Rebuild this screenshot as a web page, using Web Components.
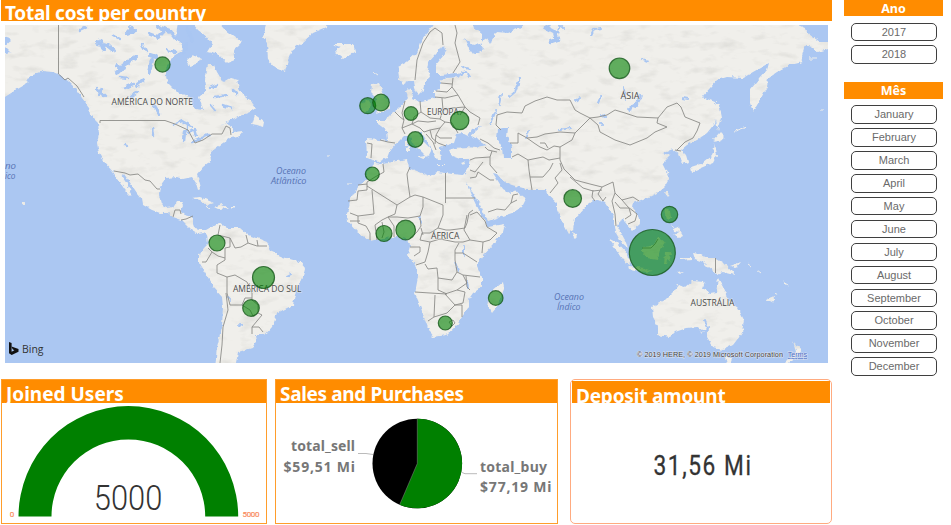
<!DOCTYPE html>
<html lang="pt">
<head>
<meta charset="utf-8">
<title>Dashboard</title>
<style>
html,body{margin:0;background:#fff;height:525px;overflow:hidden}
</style>
</head>
<body>
<cost-dashboard></cost-dashboard>
<script>
const define = (name, html, setup) => customElements.define(name, class extends HTMLElement {
  constructor() {
    super();
    this.attachShadow({ mode: 'open' }).innerHTML = html;
  }
  connectedCallback() { if (setup) setup(this, this.shadowRoot); }
});

define('title-bar', `
<style>
:host{display:block;background:#ff8c00;color:#fff;overflow:hidden;height:var(--bar-h,21px);box-sizing:border-box;
font:700 19px/25px "Noto Sans","Open Sans",sans-serif;padding:var(--bar-pad,1px 0 0 4px);white-space:nowrap;letter-spacing:var(--bar-ls,0)}
</style><slot></slot>`);

const borders = [
 '58.5,25 58.5,74 65,80 68,78 77,86 84,97','100,123 100,120.5 165,120.5 175,124 188,130 195,143 203,140 212,134 222,134 226,126 230,128 231,135',
 '114,171 125,173 130,175 138,174 145,180 150,181 157,189 160,189','173,217 175,210 180,210 181,214','181,220 186,219 193,216',
 '220,225 218,235 230,238 230,247 225,248 225,260 217,265 217,273 227,277 235,275 247,282 252,293 252,300 258,305 258,313 262,315 252,327 252,334',
 '227,277 227,293 230,305 242,305 245,298 252,298','226,293 228,310 223,327 222,345 220,363','242,305 250,310 253,316 258,313','252,327 259,327 263,332',
 '202,262 206,262 212,252 208,248','212,252 218,256 225,258','230,238 235,248 241,247 248,243 246,235','248,243 257,246 267,246','257,240 258,246',
 '383,164 384,172 375,177 367,182 367,186 397,205 410,197 408,183 407,174 410,167','367,184 358,185','367,186 367,190 358,191 357,200 348,201','372,190 374,214 358,216 350,213',
 '397,205 395,214 388,217 382,220 375,225 377,240','410,197 415,195 423,197 443,205','445.5,173 445.5,203','445.5,198 475,198','443,205 443,215 438,228 446,230 450,230 458,229 465,228 467,223 469,213 473,210',
 '423,197 423,207 420,216 408,218 397,217 388,217','420,218 421,226 417,232 410,238','388,217 394,226 394,237','382,222 384,232 382,238','358,216 358,223 366,226 370,233 370,240','350,221 360,221',
 '467,215 464,230 470,240 483,242 490,240 497,233 487,227 485,221 477,212 470,215','483,242 482,253','422,233 420,240 430,242 440,239 455,242 463,242 470,240','438,228 430,233 422,233','421,228 423,235',
 '410,247 420,247 420,252 414,256','430,242 428,252 425,262 416,265','425,264 428,269 437,268 438,278 452,280 457,272 455,260 455,250 459,243','415,292 430,293 447,294 438,290 438,278',
 '435,295 434,317 428,321','434,317 447,313 455,305 445,294','445,294 457,290 465,292 463,303 455,305 462,305 462,317','457,290 467,283 463,275 457,272','463,275 480,277','455,253 463,253 477,262','466,276 467,287 470,290','449,322 453,320 455,323 452,326 449,322',
 '415,80 417,60 423,43 430,32 435,28 442,33 443,45','455,25 457,33 455,43 460,62 453,73','453,78 452,87 458,95 465,107 460,115','436,91 447,92 452,87','435,97 445,98 458,95','441,83 452,84','420,101 421,112 430,118 440,119 443,110 442,98',
 '405,101 402,113 404,120 402,128 405,134','395,112 400,117 404,120','402,128 412,124 420,128 424,132','412,124 414,117 421,112','412,124 418,121 428,122 436,121','424,132 430,130 440,128 445,122 440,119','440,128 436,135 440,138 452,138','430,130 432,138 438,143 446,146','426,134 433,142 436,150','436,135 435,144',
 '443,110 452,108 465,107 470,112 480,118 478,125','445,122 452,123 455,128 458,133','367,143 372,144 371,158','380,140 388,142 395,143',
 '480,139 488,143 494,148 500,150','485,147 488,150 497,152','470,160 475,158 490,157 492,151','490,157 490,165 497,173','470,170 475,172 483,162','470,178 476,177 478,172 490,180 494,180','488,212 497,209 505,210 511,203 517,200','511,203 513,195 518,194',
 '501,130 496,125 497,115 507,112 522,113 525,106 535,101 547,97 557,100 570,100 575,110 580,113 590,118 598,117 607,115 615,110 625,113 637,117 658,118 667,107 677,103 681,107 685,117 700,123 697,131 693,138 685,142 677,150',
 '590,118 598,125 600,132 615,140 630,145 647,138 655,132 667,127 657,123 658,118','590,118 583,125 575,133 572,140 560,147 560,160 564,169 575,180 590,184 602,187 613,182 615,193 622,200 633,197 639,201',
 '570,177 583,188 593,191 602,190','602,187 598,194 603,201 606,197','615,193 612,201 615,214 616,226','615,202 620,208 629,208 631,215 625,219','622,200 628,207 637,214 635,221 628,224','593,190 592,197 595,201','550,193 558,183 555,178 562,170 560,163',
 '510,143 518,143 518,133 527,138 534,143 540,147 547,150 554,146 560,147','512,157 518,154 528,160 543,157 549,160 560,158','528,160 529,170 530,177 532,190','530,177 543,177 550,169 553,163','540,143 545,143 548,148','527,138 537,137 545,134 560,132 575,133',
 '642,248 651,248 655,244 658,239','715.5,258 715.5,273','675,150 681,151'
].map(p => `<polyline points="${p}"/>`).join('');

const lakes = `
<g fill="none" stroke="#a9c6f2" stroke-linecap="round" stroke-linejoin="round">
<path stroke-width="4" d="M97 43l10 2 6 5M101 41l3 9M118 66l6 3-8 3M150 55l6 2M152 60l-3 12M136 57l-7 4-10 8M126 33l9-2M150 34l8 3 6-6M130 27l4 5M158 27l12 4 6 8M143 80l-6 5M187 28l5 12M186 44l-2 8"/>
<path stroke-width="2.5" d="M154 105l6 10M174 125l8-4 9 5M184 141l1-9 3-5M188 133l6-4 2 7M193 142l8-3M203 137l6-2M96 88l9 8M99 95l3-6M152 128l1 7M125 145l2 1M113 35l7 4M80 30l7-3M124 88l9-4M137 92l-6 5M120 77l9 1M167 50l8 2M142 44l4 7M210 88l7-3M215 97l12-2M223 105l9 3M233 90l4 4M211 105l4 5"/>
<path stroke-width="2" d="M563 28l-3-3-3 9M591 35l3-6 8-1M642 59l6 2M624 88l1 12M520 78l-5 14-6 5M501 95l-2 10M496 110l-6 15M529 131l-3 8M559 130l11-2M601 96l-3 7M575 101l4-3M683 98l5 1M459 75l7-3 3 5M463 67l7 2M601 115l4 2M600 123l2 1M464 246v9M455 262l3 9M467 282l1 6M420 218l1 4M287 276l4-2M240 325l2 1M228 298l2 2M705 320l3 8M702 331l6-2"/>
<path stroke-width="3.6" d="M629 109l8-5 4-8"/>
<path stroke-width="4.5" d="M546 27l9 5 2 8-6 2"/>
</g>`;

define('world-map', `
<style>
:host{display:block;overflow:hidden;background:#abc7f2}
svg{display:block;width:823px;height:338px}
.c{font:8.6px "Open Sans","Noto Sans",sans-serif;fill:#4a4a4a;stroke:#f3f3ef;stroke-opacity:.7;stroke-width:1.2px;paint-order:stroke}
.o{font:italic 8.6px "Open Sans","Noto Sans",sans-serif;fill:#5672b2}
.bing{font:11.5px "Open Sans",sans-serif;fill:#333}
.cr{font:7.3px "Liberation Sans",sans-serif;fill:#444;stroke:#e8e8f0;stroke-opacity:.8;stroke-width:1px;paint-order:stroke}
.b circle{fill:#008000;fill-opacity:.6;stroke:#17591b;stroke-opacity:.8;stroke-width:1.2}
</style>
<svg viewBox="5 25 823 338">
<defs>
<filter id="rough" x="5" y="25" width="823" height="338" filterUnits="userSpaceOnUse" color-interpolation-filters="sRGB">
<feTurbulence type="fractalNoise" baseFrequency=".22" numOctaves="2" seed="4" result="n"/>
<feDisplacementMap in="SourceGraphic" in2="n" scale="4.5" xChannelSelector="R" yChannelSelector="G"/>
</filter>
<filter id="terrain" x="5" y="25" width="823" height="338" filterUnits="userSpaceOnUse" color-interpolation-filters="sRGB">
<feTurbulence type="fractalNoise" baseFrequency=".22" numOctaves="2" seed="4" result="n"/>
<feDisplacementMap in="SourceGraphic" in2="n" scale="4.5" xChannelSelector="R" yChannelSelector="G"/>
<feGaussianBlur stdDeviation=".3" result="land"/>
<feTurbulence type="fractalNoise" baseFrequency=".05 .12" numOctaves="3" seed="9"/>
<feColorMatrix values="0 0 0 0 .72  0 0 0 0 .72  0 0 0 0 .70  .7 0 0 0 -.36"/>
<feComposite operator="in" in2="land" result="shade"/>
<feMerge><feMergeNode in="land"/><feMergeNode in="shade"/></feMerge>
</filter>
</defs>
<rect x="5" y="25" width="823" height="338" fill="#abc7f2"/>
<g filter="url(#terrain)" fill="#f0efeb">
<path d="M0 20H178L176 37 181 43 184 50 175 55 170 60 165 72 168 83 177 92 190 97 195 109 203 110 199 97 207 90 205 80 208 65 214 65 217 72 223 82 230 78 237 80 240 92 250 100 256 108 250 112 237 117 227 122 219 127 226 123 233 127 233 132 243 131 238 137 230 138 220 145 211 152 212 160 203 167 197 174 199 181 201 189 198 190 196 183 192 177 183 179 177 177 166 178 160 186 159 195 161 203 166 208 174 207 177 202 184 202 181 208 181 212 185 215 193 217 193 223 195 229 200 230 206 230 213 226 220 223 227 228 240 228 248 235 257 238 267 242 272 252 283 257 300 262 305 268 302 280 296 290 293 305 277 313 272 327 265 335 256 335 257 340 252 348 238 352 235 368H215L217 347 222 327 223 307 222 297 213 287 205 273 199 263 199 255 203 248 208 243 207 235 204 232 197 233 192 230 187 225 182 220 173 217 168 213 160 213 152 210 143 205 142 199 137 193 131 184 124 174 121 175 127 184 132 194 131 196 125 190 119 181 113 172 105 163 99 153 97 143 99 133 98 123 90 115 89 107 82 98 77 90 68 81 60 75 53 72 43 71 33 75 26 78 28 83 16 90 0 100V54L11 52 5 46 12 40 0 36Z"/>
<path d="M190 20H216L225 30 242 42 233 50 235 60 227 63 220 55 207 52 212 44 206 36 198 30ZM187 60L193 55 201 58 197 64 190 66ZM207 33l5-2 1 5-5 1zM252 124L255 115 258 117 264 122 263 127 257 125ZM268 20L263 37 267 43 268 60 275 68 285 72 288 60 292 50 303 42 313 33 327 27 330 20ZM332 44L340 47 335 53 343 59 355 52 353 44 342 44ZM372 84L380 83 382 90 385 97 390 103 389 109 376 114 378 110 374 107 377 99 371 93ZM361 104L368 100 371 105 368 111 361 112Z"/>
<path d="M366 139L380 140 387 141 386 130 377 123 377 120 385 120 390 115 395 112 400 107 405 101 408 97 406 92 410 88 413 93 412 99 418 102 427 100 435 98 435 91 440 89 440 81 447 78 460 77 457 73 440 75 436 71 436 65 442 57 447 50 441 46 437 53 428 63 427 70 430 75 425 82 423 90 418 95 415 88 414 81 408 81 403 84 399 78 398 67 407 62 417 53 422 40 430 30 436 20H465L482 33 482 42 473 45 464 38 468 47 473 54 484 49 480 43 487 38 490 43 497 32 507 33 520 28 530 20H786L805 28 810 35 820 42 828 42 828 49 818 52 812 47 805 45 802 55 803 62 790 65 777 72 768 78 767 87 760 100 753 112 750 103 750 90 760 78 767 70 769 63 760 68 753 72 743 78 727 77 717 80 710 88 702 97 715 102 718 110 715 123 707 133 697 140 687 145 681 150 686 155 688 162 683 164 679 154 672 149 662 153 671 155 663 163 668 173 669 179 665 186 657 193 647 198 638 201 633 203 632 208 638 215 640 223 632 230 625 222 621 218 617 226 625 240 628 248 621 242 616 233 613 215 605 203 598 200 593 201 586 206 575 218 573 230 569 234 563 223 557 210 557 203 548 195 546 190 532 190 523 188 512 185 503 181 497 174 493 173 503 189 510 193 516 190 519 194 526 199 522 207 512 213 488 221 480 205 470 188 466 180 470 192 477 207 482 217 488 227 505 224 503 232 493 245 482 257 477 266 482 277 482 287 473 293 468 300 468 308 462 317 455 328 447 335 433 337 430 333 425 320 421 308 415 293 418 277 415 265 408 255 410 245 407 239 397 237 383 238 370 241 357 232 348 222 347 213 351 199 358 186 367 180 367 172 375 163 383 164 407 159 409 168 422 173 430 176 437 172 445 173 463 175 468 169 470 159 460 159 452 156 449 150 455 148 467 147 475 148 486 145 478 139 470 136 476 131 482 126 472 129 468 136 462 133 457 134 454 143 440 147 440 151 441 160 437 160 433 151 427 141 421 132 418 133 424 142 431 149 427 157 422 152 414 145 409 136 404 136 398 142 395 144 390 150 387 158 378 162 373 160 367 158Z"/>
<path d="M417 156l8-1 0 5zM406 147l3-1 0 6-3 0zM406 141h2v4h-2zM438 165h7v1h-7zM461 163l5-2-3 4zM433 90h2v3h-2zM573 231l4 5-3 3zM503 282L504 288 497 307 492 313 488 307 490 293ZM608 238L617 243 628 255 630 265 625 262 617 250ZM642 247L653 246 658 237 665 242 660 250 658 260 647 258 642 252ZM629 266L644 268 653 271 645 272 630 269ZM665 253l6-1 1 3-4 0 4 7-4-3-1 5-3 0zM665 208l5 2 1 8-4 3zM671 224l3 4 4-1 2 5-6-1zM673 235L680 231 683 236 679 238ZM665 193L669 190 668 197ZM681 258h10v1l-10 1zM676 273l8-1-5 3zM693 253L700 254 707 258 715 258 727 265 735 275 723 272 717 274 708 267 703 262 695 259ZM730 266l11-4-5 6zM652 307L653 317 658 326 657 335 670 337 675 332 687 328 697 327 702 333 707 330 707 337 713 347 723 350 733 345 742 333 744 320 738 308 728 300 723 287 718 278 716 293 710 294 703 288 705 282 692 281 685 287 678 285 673 292 665 300ZM725 357L732 358 730 364 727 364ZM793 340L796 346 802 349 797 356 792 360 784 368 780 368 790 358 796 352ZM716 101L720 108 722 118 718 130 716 120ZM713 140L720 132 726 138 718 142ZM715 143L717 155 713 163 703 167 692 172 691 167 703 163 712 156ZM192 198L200 197 207 200 214 203 208 205 200 200ZM214 207L222 204 229 208 218 209ZM206 207l4 0 0 2-4-1zM231 207h4v1.5h-4zM22 201l3 2 0 2-3-1zM767 300l7-3 0 3-6 1z"/>
</g>
<g filter="url(#rough)">
<path fill="#a9c6f2" d="M498 130L508 128 507 137 512 147 512 158 503 158 502 147 497 138Z"/>
${lakes}
<path fill="none" stroke="#efeeea" stroke-width="1" d="M774 293l5 2M783 282l5 3M748 264l4 3M757 270l4 3M767 299l6 3M346 183l7 0M809 58h8M820 110h4M735 131l12-4M374 72l3 2M327 156h2"/>
</g>
<g fill="none" stroke="#8c8c89" stroke-width=".9" stroke-linejoin="round">${borders}</g>
<text class="c" x="111.5" y="104.7" textLength="81.5" lengthAdjust="spacingAndGlyphs">AMÉRICA DO NORTE</text>
<text class="c" x="427" y="114.8" textLength="31.5" lengthAdjust="spacingAndGlyphs">EUROPA</text>
<text class="c" x="620.5" y="98.7" textLength="19" lengthAdjust="spacingAndGlyphs">ÁSIA</text>
<text class="c" x="431" y="239.2" textLength="28.3" lengthAdjust="spacingAndGlyphs">ÁFRICA</text>
<text class="c" x="233" y="291.8" textLength="68.5" lengthAdjust="spacingAndGlyphs">AMÉRICA DO SUL</text>
<text class="c" x="690.5" y="306.2" textLength="44" lengthAdjust="spacingAndGlyphs">AUSTRÁLIA</text>
<text class="o" x="276" y="174.3" textLength="30" lengthAdjust="spacingAndGlyphs">Oceano</text>
<text class="o" x="271" y="184.2" textLength="35.5" lengthAdjust="spacingAndGlyphs">Atlântico</text>
<text class="o" x="554" y="300.3" textLength="30" lengthAdjust="spacingAndGlyphs">Oceano</text>
<text class="o" x="557" y="310.3" textLength="23.5" lengthAdjust="spacingAndGlyphs">Índico</text>
<text class="o" x="5" y="169.3" textLength="11" lengthAdjust="spacingAndGlyphs">no</text>
<text class="o" x="5" y="179" textLength="10.5" lengthAdjust="spacingAndGlyphs">ico</text>
<path fill="#111" d="M9 342l2.600 1v8.800l2.800-1.600-1.800-.9-1.100-2.800 7 2.500v2.700L11.700 355 9 353.300z"/>
<text class="bing" x="22" y="353" textLength="21.500" lengthAdjust="spacingAndGlyphs">Bing</text>
<text class="cr" x="637" y="357.300" textLength="146">© 2019 HERE, © 2019 Microsoft Corporation</text>
<text class="cr" x="787.700" y="357.300" textLength="19.500" style="fill:#4c70c8;text-decoration:underline">Terms</text>
<g class="b"></g>
</svg>`, (el, root) => {
  const data = [[162.5,64.5,7.6],[367.7,105.7,8],[381,102.5,8.3],[411,113.5,6.8],[415.3,139.5,7.8],[459.7,120.5,9.2],[619.5,68.3,10.3],[372.3,174,7],[384,233.5,8],[405.7,230,9.8],[572.7,198.5,8.8],[669.5,214.5,8.2],[652.3,252.5,23],[217,243,8],[263.5,277.5,11],[251,308,8.3],[445.3,323,7],[495.7,298,7.3]];
  root.querySelector('.b').innerHTML = data.map(([x, y, r]) => `<circle cx="${x}" cy="${y}" r="${r}"/>`).join('');
});

define('slicer-list', `
<style>
:host{display:block}
h2{margin:0 0 var(--gap-top,7px);height:var(--h,15.5px);background:#ff8c00;color:#fff;text-align:center;
font:700 12.5px/17px "Noto Sans","Open Sans",sans-serif;overflow:hidden}
ul{list-style:none;margin:0;padding:0 6px 0 7px;display:grid;row-gap:4.4px}
li{box-sizing:border-box;height:18.5px;border:1.3px solid #3f3f3f;border-radius:5px;text-align:center;color:#6a6a6a;
font:11px/16px "Liberation Sans",Arial,sans-serif}
</style><h2></h2><ul></ul>`, (el, root) => {
  root.querySelector('h2').textContent = el.getAttribute('label');
  root.querySelector('ul').innerHTML = el.getAttribute('items').split(',').map(t => `<li>${t}</li>`).join('');
});

define('tile-card', `
<style>
:host{display:flex;flex-direction:column;box-sizing:border-box;border:1px solid #ff9d2b;background:#fff;overflow:hidden}
.body{flex:1;min-height:0}
</style><slot name="title"></slot><div class="body"><slot></slot></div>`);

define('gauge-chart', `
<style>:host,svg{display:block}
.v{font:300 35px Roboto,sans-serif;fill:#333}.l{font:8px Roboto,sans-serif;fill:#f98a5c;stroke:#f98a5c;stroke-width:.2}</style>
<svg width="264" height="120" viewBox="2 403 264 120">
<path fill="#008000" d="M18.500 516.500A109.800 110.500 0 0 1 238.200 516.500H205.200A76.800 77 0 0 0 51.500 516.500Z"/>
<text class="v" x="93.800" y="510" textLength="68.500" lengthAdjust="spacingAndGlyphs">5000</text>
<text class="l" x="9.800" y="517" textLength="4.500">0</text>
<text class="l" x="242.500" y="517" textLength="17">5000</text></svg>`);

define('pie-chart', `
<style>:host,svg{display:block}text{font:700 14px "Noto Sans","Open Sans",sans-serif;fill:#777}</style>
<svg width="281" height="120" viewBox="276 403 281 120">
<circle cx="417.300" cy="463.500" r="44.800" fill="#000"/>
<path fill="#008000" d="M417.300 463.500V418.700A44.800 44.800 0 1 1 399.700 504.700Z"/>
<path fill="none" stroke="#888" stroke-width=".5" d="M417.300 418.700V463.500L399.700 504.700"/>
<path fill="none" stroke="#bbb" d="M358 453.500h8l7 1M462 472.500l3 1.200h12"/>
<text x="291" y="451" textLength="64">total_sell</text><text x="283.500" y="471.800" textLength="71.500">$59,51 Mi</text>
<text x="480" y="471.800" textLength="67">total_buy</text><text x="480" y="491.800" textLength="71.500">$77,19 Mi</text></svg>`);

define('value-card', `
<style>:host,svg{display:block}text{font:400 27px Roboto,sans-serif;fill:#333;stroke:#333;stroke-width:.3}</style>
<svg width="258" height="119" viewBox="572 404 258 119"><text transform="translate(653.500 476) scale(.84 1)" textLength="116">31,56 Mi</text></svg>`);

define('cost-dashboard', `
<style>
:host{display:grid;grid-template-columns:831px 99px;column-gap:12px;padding-left:1px;align-items:start}
main{display:grid;row-gap:4px}
world-map{margin:0 4px}
.cards{display:grid;grid-template-columns:266px 283px 262px;column-gap:8px;margin-top:12px;height:145px}
#c{margin-left:4px;margin-right:-4px}
.head{--bar-ls:-.27px}
#b title-bar{--bar-ls:-.34px}
#a,#b{--bar-h:23px;--bar-pad:2px 0 0 4px}
#c{border-color:#ffab80;border-radius:5px;padding:1px 1px 0}
#c title-bar{--bar-h:22px;--bar-pad:3px 0 0 4px;--bar-ls:-.2px}
aside{display:grid;row-gap:18.500px}
#m{--h:17px;--gap-top:6px}
</style>
<main>
<title-bar class="head">Total cost per country</title-bar>
<world-map></world-map>
<section class="cards">
<tile-card id="a"><title-bar slot="title">Joined Users</title-bar><gauge-chart></gauge-chart></tile-card>
<tile-card id="b"><title-bar slot="title">Sales and Purchases</title-bar><pie-chart></pie-chart></tile-card>
<tile-card id="c"><title-bar slot="title">Deposit amount</title-bar><value-card></value-card></tile-card>
</section>
</main>
<aside>
<slicer-list label="Ano" items="2017,2018"></slicer-list>
<slicer-list id="m" label="Mês" items="January,February,March,April,May,June,July,August,September,October,November,December"></slicer-list>
</aside>`);
</script>
</body>
</html>
